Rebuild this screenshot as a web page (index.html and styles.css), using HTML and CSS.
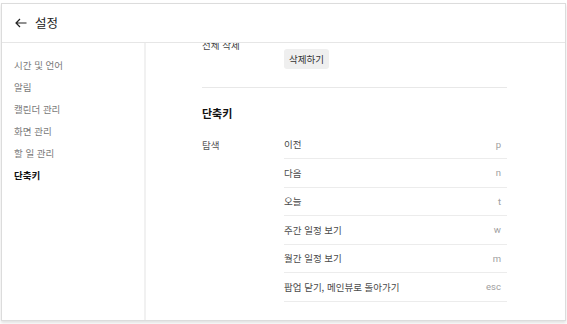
FILE: index.html
```html
<!DOCTYPE html>
<html lang="ko">
<head>
<meta charset="utf-8">
<link rel="stylesheet" href="styles.css">
</head>
<body>
<div class="panel">
  <header class="header">
    <svg class="back" width="12" height="10" viewBox="0 0 12 10"><path d="M5 1 L1 5 L5 9 M1 5 H11.5" fill="none" stroke="#222" stroke-width="1.2"/></svg>
    <span class="title">설정</span>
  </header>
  <div class="main">
    <nav class="sidebar">
      <div class="nav-item">시간 및 언어</div>
      <div class="nav-item">알림</div>
      <div class="nav-item">캘린더 관리</div>
      <div class="nav-item">화면 관리</div>
      <div class="nav-item">할 일 관리</div>
      <div class="nav-item active">단축키</div>
    </nav>
    <section class="content">
      <div class="inner">
        <div class="group">
          <div class="label">전체 삭제</div>
          <div class="value"><button class="btn">삭제하기</button></div>
        </div>
        <hr class="divider">
        <h2 class="heading">단축키</h2>
        <div class="group">
          <div class="label label-row">탐색</div>
          <div class="rows">
            <div class="row"><span>이전</span><span class="key">p</span></div>
            <div class="row"><span>다음</span><span class="key">n</span></div>
            <div class="row"><span>오늘</span><span class="key">t</span></div>
            <div class="row"><span>주간 일정 보기</span><span class="key">w</span></div>
            <div class="row"><span>월간 일정 보기</span><span class="key">m</span></div>
            <div class="row"><span>팝업 닫기, 메인뷰로 돌아가기</span><span class="key">esc</span></div>
          </div>
        </div>
      </div>
    </section>
  </div>
</div>
</body>
</html>
```
FILE: styles.css
```css
* { box-sizing: border-box; }
html, body { margin: 0; padding: 0; background: #fff; }
body {
  font-family: "Noto Sans CJK KR", "Noto Sans", sans-serif;
  width: 567px;
  height: 324px;
  overflow: hidden;
}
.panel {
  margin: 3px 1px 0 1px;
  width: 565px;
  height: 318px;
  border: 1px solid #dcdcdc;
  box-shadow: 0 2px 3px rgba(0,0,0,0.12);
  display: flex;
  flex-direction: column;
  background: #fff;
}
.header {
  height: 39px;
  flex: none;
  border-bottom: 1px solid #e6e6e6;
  display: flex;
  align-items: center;
  padding-left: 13px;
  gap: 8px;
}
.back { display: block; }
.title {
  font-size: 12.5px;
  color: #222;
  line-height: 16px;
}
.main {
  flex: 1;
  display: flex;
  min-height: 0;
}
.sidebar {
  width: 144px;
  flex: none;
  border-right: 2px solid #f1f1f1;
  padding-top: 11px;
}
.nav-item {
  font-size: 9.5px;
  line-height: 14px;
  height: 22px;
  padding: 4px 0 0 12px;
  color: #7a7a7a;
}
.nav-item.active {
  color: #111;
  font-weight: 700;
}
.content {
  flex: 1;
  overflow: hidden;
  padding: 0 58px 0 56px;
}
.inner {
  margin-top: -5px;
}
.group {
  display: flex;
}
.label {
  width: 82px;
  flex: none;
  font-size: 9.5px;
  line-height: 14px;
  color: #444;
}
.value {
  padding-top: 11px;
}
.btn {
  display: block;
  font-family: inherit;
  font-size: 9.5px;
  color: #333;
  background: #efefef;
  border: none;
  border-radius: 3px;
  height: 20px;
  width: 45px;
  padding: 0;
  line-height: 20px;
}
.divider {
  border: none;
  border-top: 1px solid #e8e8e8;
  margin: 18px 0 0 0;
}
.heading {
  margin: 17px 0 0 0;
  font-size: 11px;
  font-weight: 700;
  line-height: 16px;
  color: #111;
}
.heading + .group { margin-top: 9.5px; }
.label-row {
  line-height: 28px;
  color: #555;
}
.rows { flex: 1; }
.row {
  height: 28.5px;
  border-bottom: 1px solid #ececec;
  display: flex;
  align-items: center;
  justify-content: space-between;
  padding-right: 6px;
  font-size: 9.5px;
  color: #4a4a4a;
}
.key {
  color: #a0a0a0;
  font-family: "Roboto", "Noto Sans", sans-serif;
}
```
